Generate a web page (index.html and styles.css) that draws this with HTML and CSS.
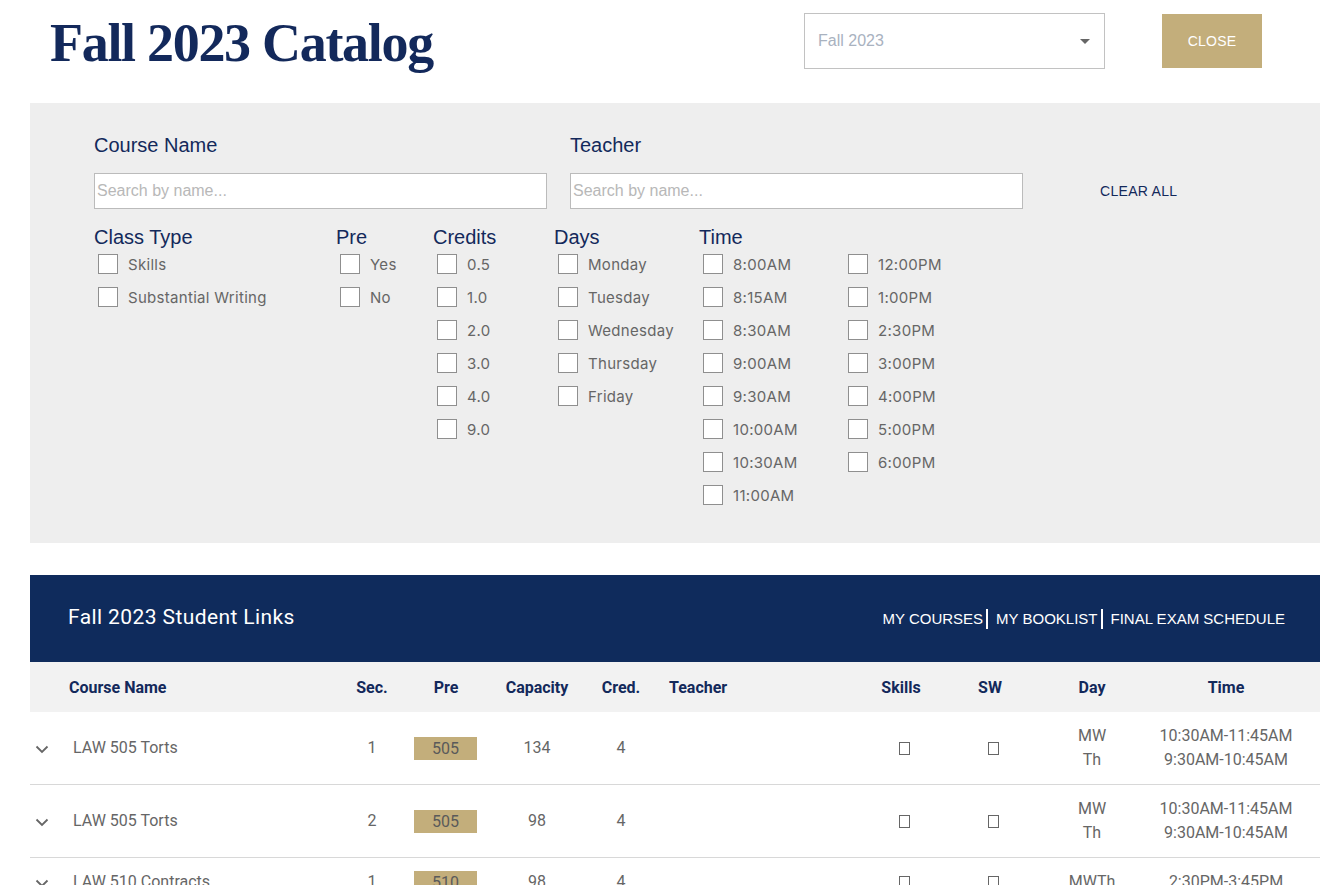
FILE: index.html
```html
<!DOCTYPE html>
<html lang="en">
<head>
<meta charset="utf-8">
<title>Fall 2023 Catalog</title>
<link rel="stylesheet" href="styles.css">
</head>
<body>
<div class="page">
  <header class="topbar">
    <h1 class="title">Fall 2023 Catalog</h1>
    <div class="select">
      <span class="select-text">Fall 2023</span>
      <span class="caret"></span>
    </div>
    <button class="close-btn">CLOSE</button>
  </header>

  <section class="filters">
    <div class="search-row">
      <div class="field">
        <label class="field-label">Course Name</label>
        <input class="search-input" type="text" placeholder="Search by name...">
      </div>
      <div class="field">
        <label class="field-label">Teacher</label>
        <input class="search-input" type="text" placeholder="Search by name...">
      </div>
      <a class="clear-all">CLEAR ALL</a>
    </div>

    <div class="groups">
      <div class="group">
        <div class="group-head">Class Type</div>
        <ul class="opts">
          <li class="opt"><span class="box"></span>Skills</li>
          <li class="opt"><span class="box"></span>Substantial Writing</li>
        </ul>
      </div>
      <div class="group">
        <div class="group-head">Pre</div>
        <ul class="opts">
          <li class="opt"><span class="box"></span>Yes</li>
          <li class="opt"><span class="box"></span>No</li>
        </ul>
      </div>
      <div class="group">
        <div class="group-head">Credits</div>
        <ul class="opts">
          <li class="opt"><span class="box"></span>0.5</li>
          <li class="opt"><span class="box"></span>1.0</li>
          <li class="opt"><span class="box"></span>2.0</li>
          <li class="opt"><span class="box"></span>3.0</li>
          <li class="opt"><span class="box"></span>4.0</li>
          <li class="opt"><span class="box"></span>9.0</li>
        </ul>
      </div>
      <div class="group">
        <div class="group-head">Days</div>
        <ul class="opts">
          <li class="opt"><span class="box"></span>Monday</li>
          <li class="opt"><span class="box"></span>Tuesday</li>
          <li class="opt"><span class="box"></span>Wednesday</li>
          <li class="opt"><span class="box"></span>Thursday</li>
          <li class="opt"><span class="box"></span>Friday</li>
        </ul>
      </div>
      <div class="group">
        <div class="group-head">Time</div>
        <div class="time-cols">
          <ul class="opts time-col">
            <li class="opt"><span class="box"></span>8:00AM</li>
            <li class="opt"><span class="box"></span>8:15AM</li>
            <li class="opt"><span class="box"></span>8:30AM</li>
            <li class="opt"><span class="box"></span>9:00AM</li>
            <li class="opt"><span class="box"></span>9:30AM</li>
            <li class="opt"><span class="box"></span>10:00AM</li>
            <li class="opt"><span class="box"></span>10:30AM</li>
            <li class="opt"><span class="box"></span>11:00AM</li>
          </ul>
          <ul class="opts time-col">
            <li class="opt"><span class="box"></span>12:00PM</li>
            <li class="opt"><span class="box"></span>1:00PM</li>
            <li class="opt"><span class="box"></span>2:30PM</li>
            <li class="opt"><span class="box"></span>3:00PM</li>
            <li class="opt"><span class="box"></span>4:00PM</li>
            <li class="opt"><span class="box"></span>5:00PM</li>
            <li class="opt"><span class="box"></span>6:00PM</li>
          </ul>
        </div>
      </div>
    </div>
  </section>

  <section class="links-bar">
    <h2 class="links-title">Fall 2023 Student Links</h2>
    <nav class="links">
      <a class="link">MY COURSES</a>
      <a class="link">MY BOOKLIST</a>
      <a class="link">FINAL EXAM SCHEDULE</a>
    </nav>
  </section>

  <div class="table">
    <div class="trow thead">
      <div class="c-chev"></div>
      <div class="c-name">Course Name</div>
      <div class="c-mid">Sec.</div>
      <div class="c-mid">Pre</div>
      <div class="c-mid">Capacity</div>
      <div class="c-mid">Cred.</div>
      <div class="c-teacher">Teacher</div>
      <div class="c-mid">Skills</div>
      <div class="c-mid">SW</div>
      <div class="c-mid">Day</div>
      <div class="c-mid">Time</div>
    </div>

    <div class="trow tbody">
      <div class="c-chev"><svg class="chev" width="14" height="9" viewBox="0 0 14 9"><path d="M1.5 1.5 L7 7 L12.5 1.5" fill="none" stroke="#666" stroke-width="1.8"/></svg></div>
      <div class="c-name">LAW 505 Torts</div>
      <div class="c-mid">1</div>
      <div class="c-mid"><span class="badge">505</span></div>
      <div class="c-mid">134</div>
      <div class="c-mid">4</div>
      <div class="c-teacher"></div>
      <div class="c-mid"><span class="mini-box"></span></div>
      <div class="c-mid"><span class="mini-box"></span></div>
      <div class="c-mid stack"><span>MW</span><span>Th</span></div>
      <div class="c-mid stack"><span>10:30AM-11:45AM</span><span>9:30AM-10:45AM</span></div>
    </div>

    <div class="trow tbody">
      <div class="c-chev"><svg class="chev" width="14" height="9" viewBox="0 0 14 9"><path d="M1.5 1.5 L7 7 L12.5 1.5" fill="none" stroke="#666" stroke-width="1.8"/></svg></div>
      <div class="c-name">LAW 505 Torts</div>
      <div class="c-mid">2</div>
      <div class="c-mid"><span class="badge">505</span></div>
      <div class="c-mid">98</div>
      <div class="c-mid">4</div>
      <div class="c-teacher"></div>
      <div class="c-mid"><span class="mini-box"></span></div>
      <div class="c-mid"><span class="mini-box"></span></div>
      <div class="c-mid stack"><span>MW</span><span>Th</span></div>
      <div class="c-mid stack"><span>10:30AM-11:45AM</span><span>9:30AM-10:45AM</span></div>
    </div>

    <div class="trow tbody">
      <div class="c-chev"><svg class="chev" width="14" height="9" viewBox="0 0 14 9"><path d="M1.5 1.5 L7 7 L12.5 1.5" fill="none" stroke="#666" stroke-width="1.8"/></svg></div>
      <div class="c-name">LAW 510 Contracts</div>
      <div class="c-mid">1</div>
      <div class="c-mid"><span class="badge">510</span></div>
      <div class="c-mid">98</div>
      <div class="c-mid">4</div>
      <div class="c-teacher"></div>
      <div class="c-mid"><span class="mini-box"></span></div>
      <div class="c-mid"><span class="mini-box"></span></div>
      <div class="c-mid stack"><span>MWTh</span></div>
      <div class="c-mid stack"><span>2:30PM-3:45PM</span></div>
    </div>
  </div>
</div>
</body>
</html>
```

FILE: styles.css
```css
* { box-sizing: border-box; }

html, body {
  margin: 0;
  padding: 0;
  background: #ffffff;
}

body {
  font-family: "Liberation Sans", Arial, sans-serif;
  color: #666666;
}

.page {
  width: 1290px;
  margin-left: 30px;
}

/* ---------- top bar ---------- */
.topbar {
  display: flex;
  align-items: center;
  height: 82px;
  padding-left: 20px;
  margin-bottom: 21px;
}

.title {
  margin: 0;
  font-family: "Liberation Serif", "Times New Roman", serif;
  font-weight: 700;
  font-size: 54px;
  letter-spacing: -1.3px;
  color: #13295b;
  line-height: 1;
  padding-top: 4px;
}

.select {
  margin-left: auto;
  width: 301px;
  height: 56px;
  border: 1px solid #c2c2c2;
  display: flex;
  align-items: center;
  padding: 0 14px 0 13px;
  margin-top: -1px;
}

.select-text {
  font-size: 16px;
  color: #a9b2bf;
  flex: 1;
}

.caret {
  width: 0;
  height: 0;
  border-left: 5px solid transparent;
  border-right: 5px solid transparent;
  border-top: 5px solid #666;
  margin-top: 2px;
}

.close-btn {
  margin-left: 57px;
  margin-right: 58px;
  width: 100px;
  height: 54px;
  border: 0;
  background: #c3ae7b;
  color: #ffffff;
  font-family: "Liberation Sans", Arial, sans-serif;
  font-size: 14px;
  letter-spacing: 0.2px;
  padding: 0;
}

/* ---------- filters ---------- */
.filters {
  background: #eeeeee;
  padding: 30px 0 38px 64px;
}

.search-row {
  display: flex;
  align-items: flex-end;
  gap: 23px;
}

.field {
  display: flex;
  flex-direction: column;
  width: 453px;
}

.field-label {
  font-size: 20px;
  line-height: 24px;
  color: #13295b;
  margin-bottom: 16px;
}

.search-input {
  height: 36px;
  border: 1px solid #bbbbbb;
  background: #ffffff;
  font-family: "Liberation Sans", Arial, sans-serif;
  font-size: 16px;
  padding: 0 2px;
  margin: 0;
  outline: none;
}

.search-input::placeholder {
  color: #b8b8b8;
}

.clear-all {
  margin-left: 54px;
  height: 36px;
  line-height: 36px;
  font-size: 14px;
  color: #13295b;
  letter-spacing: 0.3px;
}

.groups {
  display: grid;
  grid-template-columns: 242px 97px 121px 145px auto;
  margin-top: 16px;
}

.group-head {
  font-size: 20px;
  line-height: 24px;
  color: #13295b;
  margin-bottom: 5px;
}

.opts {
  list-style: none;
  margin: 0;
  padding: 0 0 0 4px;
}

.opt {
  display: flex;
  align-items: center;
  height: 20px;
  margin-bottom: 13px;
  font-family: Inter, "Noto Sans", sans-serif;
  font-size: 15px;
  letter-spacing: 0.3px;
  color: #666666;
  white-space: nowrap;
}

.opt:last-child { margin-bottom: 0; }

.box {
  width: 20px;
  height: 20px;
  border: 1px solid #8f8f8f;
  background: #ffffff;
  margin-right: 10px;
  flex: none;
}

.time-cols {
  display: flex;
}

.time-col {
  width: 145px;
}

/* ---------- links bar ---------- */
.links-bar {
  margin-top: 32px;
  height: 87px;
  background: #0f2b5c;
  display: flex;
  align-items: center;
  padding: 0 35px 0 38px;
}

.links-title {
  margin: 0 0 4px 0;
  font-family: Roboto, sans-serif;
  font-weight: 400;
  font-size: 21px;
  letter-spacing: 0.4px;
  color: #ffffff;
}

.links {
  margin-left: auto;
  display: flex;
  align-items: center;
}

.link {
  font-size: 15px;
  color: #ffffff;
  line-height: 20px;
  padding: 0 3px 0 8px;
  border-left: 2px solid #ffffff;
}

.link:first-child {
  border-left: 0;
  padding-left: 0;
}

.link:last-child {
  padding-right: 0;
}

/* ---------- table ---------- */
.trow {
  display: grid;
  grid-template-columns: 32px 278px 64px 84px 98px 70px 204px 82px 96px 108px 160px 1fr;
  align-items: center;
  font-family: Roboto, sans-serif;
}

.thead {
  height: 50px;
  background: #f2f2f2;
  font-weight: 700;
  font-size: 16px;
  color: #13295b;
}

.thead .c-name { padding-left: 7px; }

.tbody {
  padding: 12px 0;
  border-bottom: 1px solid #d8d8d8;
  font-size: 16px;
  line-height: 24px;
  color: #666666;
}

.tbody .c-name { padding-left: 11px; }

.c-chev {
  display: flex;
  justify-content: flex-end;
  padding-right: 13px;
  padding-top: 2px;
}

.c-mid {
  text-align: center;
}

.c-teacher {
  padding-left: 13px;
}

.badge {
  display: inline-block;
  width: 63px;
  height: 23px;
  line-height: 23px;
  background: #c3ae7b;
  color: #5a5a5a;
  margin-left: -1px;
  vertical-align: middle;
}

.mini-box {
  display: inline-block;
  width: 11px;
  height: 13px;
  border: 1px solid #666;
  vertical-align: middle;
  margin-left: 6px;
}

.stack {
  display: flex;
  flex-direction: column;
  align-items: center;
  line-height: 24px;
}
```
